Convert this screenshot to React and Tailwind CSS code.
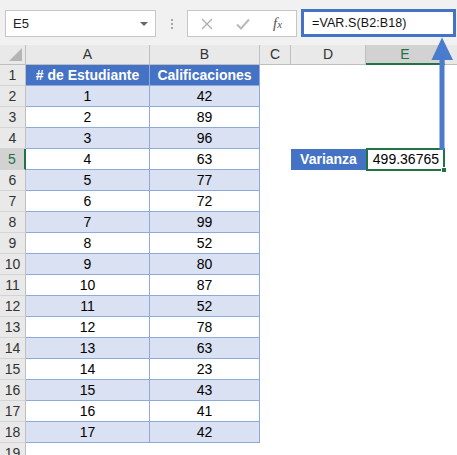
import React from "react";

const data = [
  [1, 42], [2, 89], [3, 96], [4, 63], [5, 77], [6, 72], [7, 99], [8, 52], [9, 80],
  [10, 87], [11, 52], [12, 78], [13, 63], [14, 23], [15, 43], [16, 41], [17, 42],
];

function RowHeader({ n, selected }) {
  return (
    <div
      className={
        "w-[26px] shrink-0 h-full flex items-center justify-center border-b border-[#d4d4d4] text-[14px] " +
        (selected
          ? "bg-[#d2d2d2] border-r-2 border-r-[#217346] text-[#217346]"
          : "bg-[#e9e9e9] border-r border-r-[#bfbfbf] text-[#333]")
      }
    >
      {n}
    </div>
  );
}

export default function App() {
  return (
    <div className="relative w-[457px] h-[455px] overflow-hidden bg-white font-['Liberation_Sans',Arial,sans-serif] text-black">
      {/* Toolbar */}
      <div className="h-[45px] bg-[#f1f1f1] flex items-start pt-[9px]">
        <div className="ml-[5px] w-[151px] h-[27px] mt-[1px] bg-white border border-[#c6c6c6] flex items-center justify-between pl-[7px] pr-[7px]">
          <span className="text-[13px] text-[#222]">E5</span>
          <span className="w-0 h-0 border-l-[4px] border-r-[4px] border-t-[4px] border-l-transparent border-r-transparent border-t-[#666]" />
        </div>
        <div className="w-[31px] h-[27px] mt-[1px] flex flex-col items-center justify-center gap-[2px]">
          <span className="w-[2px] h-[2px] bg-[#a8a8a8]" />
          <span className="w-[2px] h-[2px] bg-[#a8a8a8]" />
          <span className="w-[2px] h-[2px] bg-[#a8a8a8]" />
        </div>
        <div className="w-[110px] h-[27px] mt-[1px] bg-white border border-[#c6c6c6] flex items-center">
          <div className="w-[38px] flex justify-center">
            <svg width="12" height="12" viewBox="0 0 12 12">
              <path d="M1 1 L11 11 M11 1 L1 11" stroke="#b0b0b0" strokeWidth="1.4" fill="none" />
            </svg>
          </div>
          <div className="w-[33px] flex justify-center">
            <svg width="14" height="12" viewBox="0 0 14 12">
              <path d="M1 6.5 L5 10.5 L13 1.5" stroke="#b8b8b8" strokeWidth="2" fill="none" />
            </svg>
          </div>
          <div className="flex-1 flex justify-center">
            <span className="font-['Liberation_Serif',serif] italic text-[15px] text-[#555] leading-none">
              f<span className="text-[11px]">x</span>
            </span>
          </div>
        </div>
        <div className="ml-[4px] w-[155px] h-[28px] border-[3px] border-[#4472c4] bg-white flex items-center pl-[8px]">
          <span className="text-[12.5px] text-[#111] tracking-[0.1px]">=VAR.S(B2:B18)</span>
        </div>
      </div>

      {/* Column headers */}
      <div className="h-[20px] flex bg-[#e9e9e9] text-[14px] text-[#333]">
        <div className="w-[26px] shrink-0 h-full border-r border-b border-[#bfbfbf] relative">
          <span className="absolute right-[3px] bottom-[3px] w-0 h-0 border-l-[13px] border-t-[13px] border-l-transparent border-t-transparent border-b-0 border-r-0" style={{}} />
          <svg className="absolute right-[3px] bottom-[3px]" width="13" height="13" viewBox="0 0 13 13">
            <path d="M13 0 L13 13 L0 13 Z" fill="#b5b5b5" />
          </svg>
        </div>
        <div className="w-[124px] shrink-0 h-full border-r border-b border-[#bfbfbf] flex items-center justify-center">A</div>
        <div className="w-[110px] shrink-0 h-full border-r border-b border-[#bfbfbf] flex items-center justify-center">B</div>
        <div className="w-[31px] shrink-0 h-full border-r border-b border-[#bfbfbf] flex items-center justify-center">C</div>
        <div className="w-[75px] shrink-0 h-full border-r border-b border-[#bfbfbf] flex items-center justify-center">D</div>
        <div className="w-[79px] shrink-0 h-full bg-[#d2d2d2] border-r border-r-[#bfbfbf] border-b-2 border-b-[#217346] flex items-center justify-center text-[#217346]">E</div>
        <div className="flex-1 h-full border-b border-[#bfbfbf]" />
      </div>

      {/* Row 1 */}
      <div className="h-[21px] flex">
        <RowHeader n={1} />
        <div className="w-[124px] shrink-0 h-full bg-[#4472c4] border-r border-b border-[#8ea9db] flex items-center justify-center text-white font-bold text-[14px]">
          # de Estudiante
        </div>
        <div className="w-[110px] shrink-0 h-full bg-[#4472c4] border-r border-b border-[#8ea9db] flex items-center justify-center text-white font-bold text-[14px]">
          Calificaciones
        </div>
        <div className="flex-1" />
      </div>

      {data.map(([a, b], i) => {
        const rowNum = i + 2;
        const shaded = i % 2 === 0;
        const bg = shaded ? "bg-[#d9e1f2]" : "bg-white";
        return (
          <div key={rowNum} className="h-[21px] flex">
            <RowHeader n={rowNum} selected={rowNum === 5} />
            <div className={"w-[124px] shrink-0 h-full border-r border-b border-[#8ea9db] flex items-center justify-center text-[14px] " + bg}>
              {a}
            </div>
            <div className={"w-[110px] shrink-0 h-full border-r border-b border-[#8ea9db] flex items-center justify-center text-[14px] " + bg}>
              {b}
            </div>
            {rowNum === 5 ? (
              <>
                <div className="w-[31px] shrink-0" />
                <div className="w-[75px] shrink-0 h-full bg-[#4472c4] flex items-center justify-center text-white font-bold text-[14px]">
                  Varianza
                </div>
                <div className="relative w-[79px] shrink-0 h-[23px] -mt-[1px] border-2 border-[#217346] bg-white flex items-center justify-end pr-[4px] text-[14px]">
                  499.36765
                  <span className="absolute -right-[4px] -bottom-[4px] w-[6px] h-[6px] bg-[#217346] border border-white" />
                </div>
                <div className="flex-1" />
              </>
            ) : (
              <div className="flex-1" />
            )}
          </div>
        );
      })}

      {/* Row 19 partial */}
      <div className="h-[21px] flex">
        <RowHeader n={19} />
        <div className="flex-1" />
      </div>

      {/* Annotation arrow */}
      <svg className="absolute left-0 top-0 pointer-events-none" width="457" height="455" viewBox="0 0 457 455">
        <rect x="439.5" y="58" width="5" height="92" fill="#4a7bcd" />
        <path d="M442 37.5 L453 60 L431.5 60 Z" fill="#4a7bcd" />
      </svg>
    </div>
  );
}
